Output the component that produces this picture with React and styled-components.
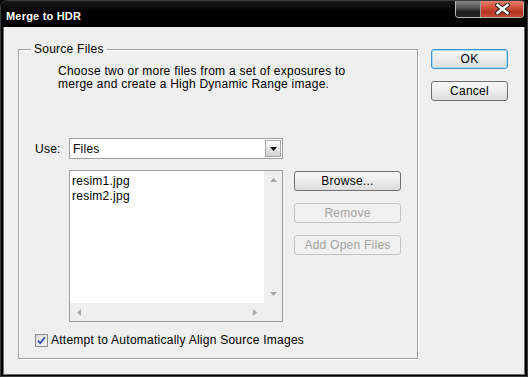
import React from "react";
import styled, { createGlobalStyle } from "styled-components";

const GlobalStyle = createGlobalStyle`
  html, body {
    margin: 0;
    padding: 0;
    background: #000;
  }
  body {
    font-family: "Liberation Sans", Arial, sans-serif;
    font-size: 12px;
    letter-spacing: 0.25px;
    color: #000;
  }
`;

const Window = styled.div`
  width: 528px;
  height: 377px;
  box-sizing: border-box;
  background: #000;
  border: 1px solid #3c3c3c;
  border-radius: 7px 7px 0 0;
  padding: 0 2px 1px 2px;
  display: flex;
  flex-direction: column;
  overflow: hidden;
`;

const TitleBar = styled.div`
  height: 26px;
  flex: none;
  display: flex;
  padding: 0 1px 0 3px;
  background: linear-gradient(#1a1a1a, #000 40%);
`;

const Title = styled.div`
  padding-top: 9px;
  font-size: 11px;
  line-height: 13px;
  font-weight: bold;
  letter-spacing: 0.2px;
  color: #fff;
`;

const Caption = styled.div`
  margin-left: auto;
  margin-top: -1px;
  height: 17px;
  display: flex;
  border: 1px solid #b8b8b8;
  border-top: none;
  border-radius: 0 0 4px 4px;
  overflow: hidden;
`;

const CaptionButton = styled.div`
  width: ${p => p.$w}px;
  height: 100%;
  display: flex;
  align-items: center;
  justify-content: center;
  background: ${p => p.$red
    ? "linear-gradient(#e88a78, #cf5038 45%, #b53420 70%, #c24a30)"
    : "linear-gradient(#8a8a8a, #555 45%, #1c1c1c 70%, #262626)"};
  & + & {
    border-left: 1px solid #9a9a9a;
  }
`;

const Body = styled.div`
  flex: 1;
  display: flex;
  align-items: flex-start;
  padding: 15px 0 0 14px;
  background: #efefef;
  border: 1px solid #6e6e6e;
  border-top: none;
`;

const Group = styled.fieldset`
  width: 400px;
  box-sizing: border-box;
  margin: 0;
  min-width: 0;
  padding: 0 16px 11px 16px;
  border: 1px solid #a0a0a0;
  box-shadow: inset 1px 1px #fff, 1px 1px #fff;
`;

const Legend = styled.legend`
  margin-left: -4px;
  padding: 0 3px;
  line-height: 14px;
  background: #efefef;
`;

const Description = styled.p`
  margin: 9px 0 0 23px;
  line-height: 13px;
  white-space: nowrap;
`;

const UseRow = styled.div`
  display: flex;
  align-items: center;
  margin-top: 47px;
`;

const Label = styled.span`
  width: 34px;
  flex: none;
`;

const Select = styled.div`
  width: 214px;
  height: 21px;
  box-sizing: border-box;
  border: 1px solid #a0a0a0;
  background: #fff;
  display: flex;
  align-items: center;
  padding: 1px 1px 1px 3px;
`;

const SelectValue = styled.span`
  flex: 1;
`;

const Arrow = styled.div`
  width: 16px;
  height: 17px;
  box-sizing: border-box;
  border: 1px solid #a8a8a8;
  background: linear-gradient(#fdfdfd, #e4e4e4 60%, #cfcfcf);
  display: flex;
  align-items: center;
  justify-content: center;
`;

const ListRow = styled.div`
  display: flex;
  align-items: flex-start;
  gap: 11px;
  margin-top: 11px;
  margin-left: 34px;
`;

const ListBox = styled.div`
  width: 214px;
  height: 152px;
  box-sizing: border-box;
  border: 1px solid #a0a0a0;
  background: #fff;
  display: grid;
  grid-template-columns: 1fr 18px;
  grid-template-rows: 1fr 18px;
`;

const Items = styled.div`
  padding: 3px 2px;
  line-height: 15px;
`;

const ScrollBar = styled.div`
  background: #efefef;
  display: flex;
  flex-direction: ${p => (p.$vertical ? "column" : "row")};
  justify-content: space-between;
`;

const Corner = styled.div`
  background: #efefef;
`;

const ScrollArrow = styled.div`
  width: 18px;
  height: 18px;
  display: flex;
  align-items: center;
  justify-content: center;
`;

const ButtonStack = styled.div`
  display: flex;
  flex-direction: column;
  gap: 12px;
  margin-top: ${p => p.$top || 0}px;
`;

const Button = styled.button`
  width: ${p => p.$w}px;
  height: 20px;
  padding: 0;
  font: 12px "Liberation Sans", Arial, sans-serif;
  letter-spacing: 0.25px;
  border-radius: 3px;
  border: 1px solid ${p => (p.disabled ? "#c4c4c4" : p.$default ? "#3d95d0" : "#707070")};
  color: ${p => (p.disabled ? "#a3a3a3" : "#000")};
  background: ${p => (p.disabled ? "#f0f0f0" : "linear-gradient(#f7f7f7, #ececec 50%, #dcdcdc)")};
  box-shadow: ${p => (p.$default ? "inset 0 0 0 1px #a9dcf6" : "none")};
`;

const CheckRow = styled.label`
  display: flex;
  align-items: center;
  gap: 3px;
  margin-top: 11px;
`;

const CheckBox = styled.span`
  width: 13px;
  height: 13px;
  box-sizing: border-box;
  border: 1px solid #8c8c8c;
  background: linear-gradient(135deg, #d9d9d9, #f7f7f7);
  display: flex;
  align-items: center;
  justify-content: center;
`;

const RightColumn = styled.div`
  margin-left: 13px;
`;

const Tri = ({ dir, color = "#a8a8a8", w = 7, h = 4 }) => {
  const pts = {
    up: `0,${h} ${w},${h} ${w / 2},0`,
    down: `0,0 ${w},0 ${w / 2},${h}`,
    left: `${h},0 ${h},${w} 0,${w / 2}`,
    right: `0,0 0,${w} ${h},${w / 2}`,
  }[dir];
  const vertical = dir === "up" || dir === "down";
  return (
    <svg width={vertical ? w : h} height={vertical ? h : w}>
      <polygon points={pts} fill={color} />
    </svg>
  );
};

const CloseIcon = () => (
  <svg width="15" height="12" viewBox="0 0 15 12">
    <path d="M2.5 2 L12.5 10 M12.5 2 L2.5 10" stroke="#2a2a2a" strokeWidth="4.6" strokeLinecap="square" />
    <path d="M2.5 2 L12.5 10 M12.5 2 L2.5 10" stroke="#fff" strokeWidth="2.4" strokeLinecap="square" />
  </svg>
);

const Check = () => (
  <svg width="9" height="9" viewBox="0 0 9 9">
    <path d="M1 4.5 L3.3 7 L8 1.2" stroke="#2d4fb0" strokeWidth="1.8" fill="none" />
  </svg>
);

export default function App() {
  return (
    <>
      <GlobalStyle />
      <Window>
        <TitleBar>
          <Title>Merge to HDR</Title>
          <Caption>
            <CaptionButton $w={24} />
            <CaptionButton $w={42} $red>
              <CloseIcon />
            </CaptionButton>
          </Caption>
        </TitleBar>
        <Body>
          <Group>
            <Legend>Source Files</Legend>
            <Description>
              Choose two or more files from a set of exposures to
              <br />
              merge and create a High Dynamic Range image.
            </Description>
            <UseRow>
              <Label>Use:</Label>
              <Select>
                <SelectValue>Files</SelectValue>
                <Arrow>
                  <Tri dir="down" color="#000" w={7} h={4} />
                </Arrow>
              </Select>
            </UseRow>
            <ListRow>
              <ListBox>
                <Items>
                  <div>resim1.jpg</div>
                  <div>resim2.jpg</div>
                </Items>
                <ScrollBar $vertical>
                  <ScrollArrow><Tri dir="up" /></ScrollArrow>
                  <ScrollArrow><Tri dir="down" /></ScrollArrow>
                </ScrollBar>
                <ScrollBar>
                  <ScrollArrow><Tri dir="left" /></ScrollArrow>
                  <ScrollArrow><Tri dir="right" /></ScrollArrow>
                </ScrollBar>
                <Corner />
              </ListBox>
              <ButtonStack $top={1}>
                <Button $w={107}>Browse...</Button>
                <Button $w={107} disabled>Remove</Button>
                <Button $w={107} disabled>Add Open Files</Button>
              </ButtonStack>
            </ListRow>
            <CheckRow>
              <CheckBox><Check /></CheckBox>
              Attempt to Automatically Align Source Images
            </CheckRow>
          </Group>
          <RightColumn>
            <ButtonStack $top={7}>
              <Button $w={77} $default>OK</Button>
              <Button $w={77}>Cancel</Button>
            </ButtonStack>
          </RightColumn>
        </Body>
      </Window>
    </>
  );
}
